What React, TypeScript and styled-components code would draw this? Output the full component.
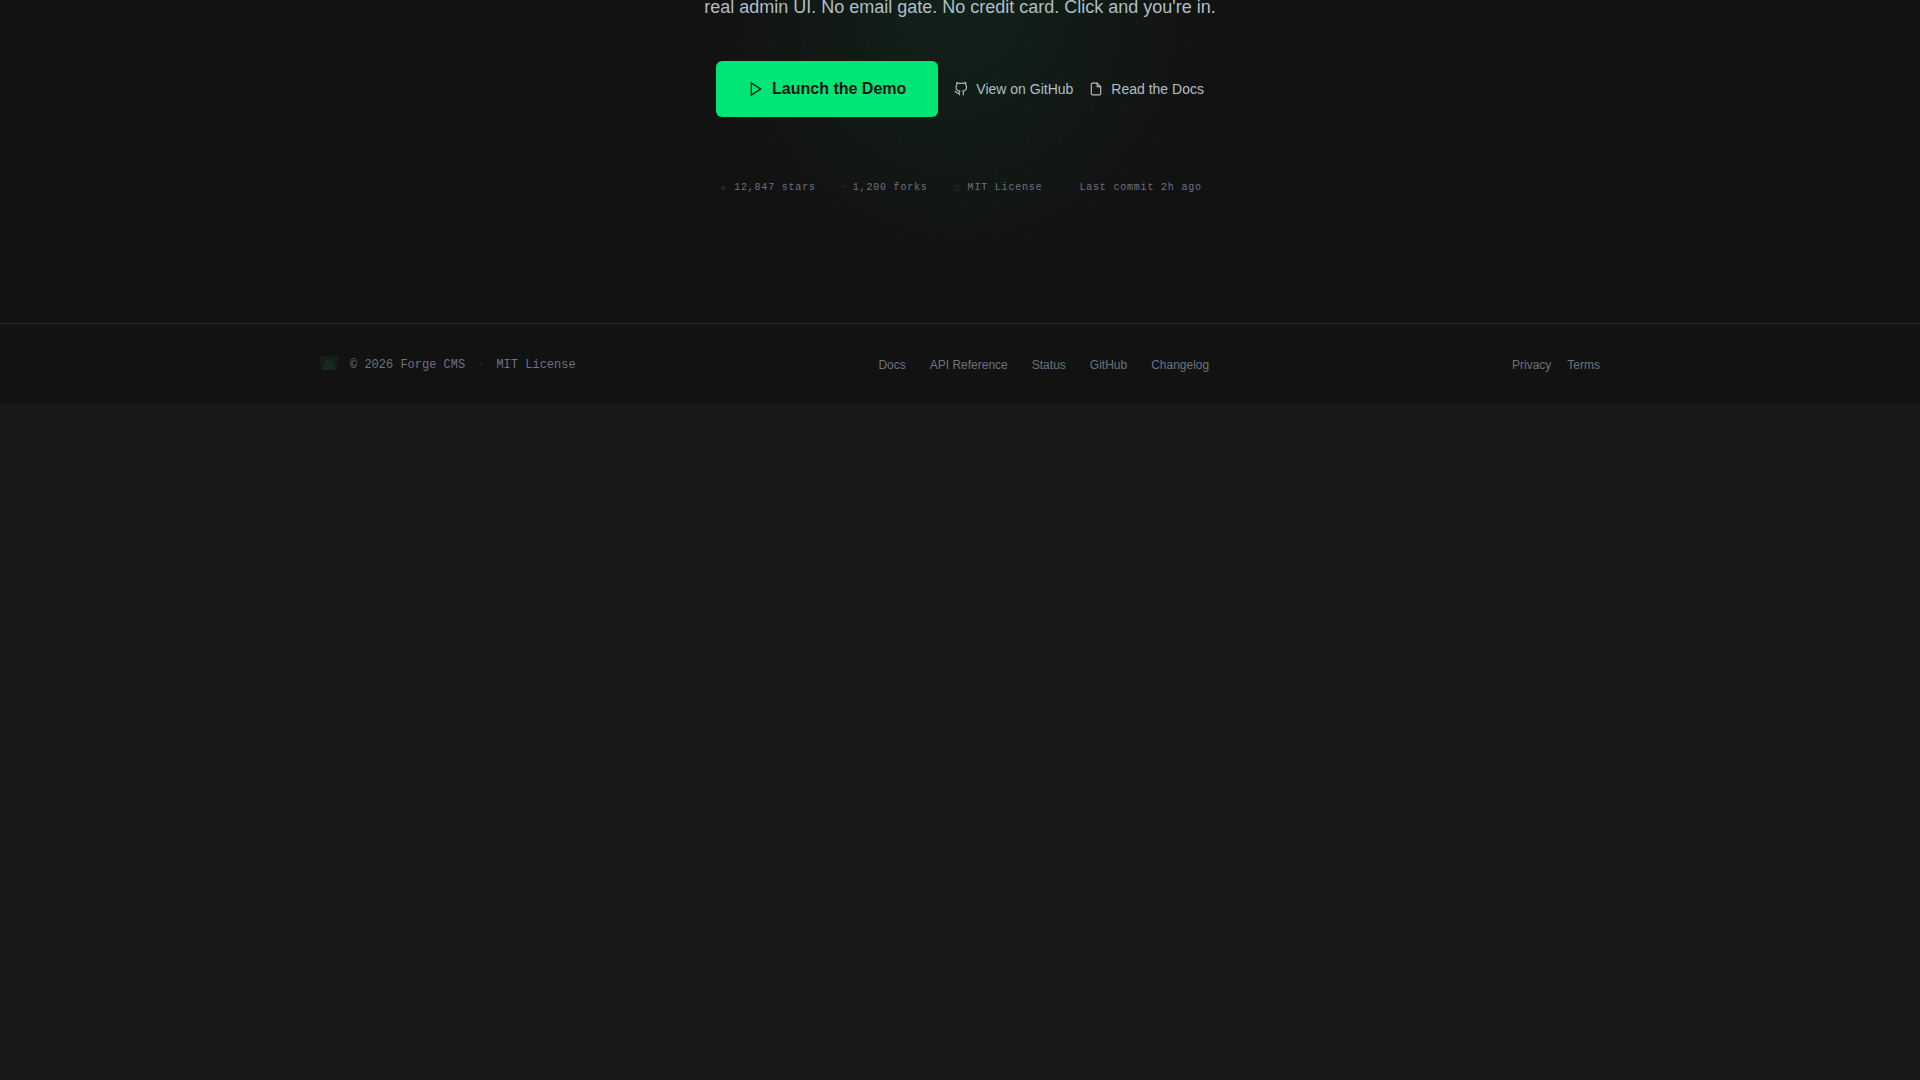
import React from "react";
import styled, { createGlobalStyle } from "styled-components";

const Global = createGlobalStyle`
  * { box-sizing: border-box; }
  body {
    margin: 0;
    background: #191919;
    font-family: "Liberation Sans", Arial, sans-serif;
  }
  a { color: inherit; text-decoration: none; }
`;

const Hero = styled.section`
  display: flex;
  flex-direction: column;
  align-items: center;
  padding-bottom: 126px;
  background:
    radial-gradient(ellipse 250px 270px at 50% 0, rgba(0, 230, 118, 0.08), rgba(0, 230, 118, 0) 100%),
    radial-gradient(circle at 4px 12px, rgba(255, 255, 255, 0.01) 1px, transparent 1px) 0 0 / 32px 32px,
    #121212;
`;

const Lead = styled.p`
  margin: 0;
  font-size: 18px;
  line-height: 14px;
  color: #b0bec5;
`;

const Actions = styled.div`
  display: flex;
  align-items: center;
  gap: 16px;
  margin-top: 47px;
`;

const Launch = styled.button`
  display: flex;
  align-items: center;
  gap: 8px;
  height: 56px;
  padding: 0 32px;
  border: 0;
  border-radius: 6px;
  background: #00e676;
  color: #121212;
  font: bold 16px "Liberation Sans", Arial, sans-serif;
  cursor: pointer;
`;

const TextLink = styled.a`
  display: flex;
  align-items: center;
  gap: 8px;
  font-size: 14px;
  line-height: 20px;
  color: #b0bec5;
`;

const Stats = styled.ul`
  display: flex;
  gap: 24px;
  margin: 62px 0 0;
  padding: 0;
  list-style: none;
  font: 10px/18px "Liberation Mono", monospace;
  letter-spacing: 0.08em;
  color: #6b7280;
`;

const Stat = styled.li`
  display: flex;
  align-items: center;
  gap: 6px;
`;

const Mark = styled.span`
  color: #2a2a2a;
`;

const StatMark = styled(Mark)<{ $wide: boolean }>`
  width: ${(p) => (p.$wide ? 10 : 7)}px;
  font-size: ${(p) => (p.$wide ? 12 : 10)}px;
  text-align: center;
  letter-spacing: 0;
`;

const Footer = styled.footer`
  border-top: 1px solid #2a2a2a;
  padding: 32px 32px 30px;
  background: #121212;
`;

const FooterInner = styled.div`
  display: flex;
  align-items: center;
  justify-content: space-between;
  max-width: 1280px;
  margin: 0 auto;
  font-size: 12px;
  line-height: 18px;
  color: #6b7280;
`;

const Legal = styled.div`
  display: flex;
  align-items: center;
  gap: 12px;
  font-family: "Liberation Mono", monospace;
`;

const Links = styled.nav<{ $gap: number }>`
  display: flex;
  gap: ${(p) => p.$gap}px;
`;

const Icon = ({ size, children }: { size: number; children: React.ReactNode }) => (
  <svg
    width={size}
    height={size}
    viewBox="0 0 24 24"
    fill="none"
    stroke="currentColor"
    strokeWidth="2"
    strokeLinecap="round"
    strokeLinejoin="round"
    aria-hidden="true"
  >
    {children}
  </svg>
);

const ForgeMark = () => (
  <svg width="18" height="18" viewBox="0 0 18 18" aria-hidden="true">
    <path d="M0 0h18v5l-1 2v7H1V7L0 5z" fill="#171d19" />
    <path d="M3 14v-4h2V5h2V3h4v2h2v5h2v4z" fill="#182b20" />
    <path d="M6 9h1v5H6zM11 9h1v5h-1zM8 5h2v3H8z" fill="#14231a" />
  </svg>
);

const stats = [
  { mark: "★", wide: true, text: "12,847 stars" },
  { mark: "⑂", wide: false, text: "1,200 forks" },
  { mark: "⚖", wide: true, text: "MIT License" },
  { mark: "·", wide: false, text: "Last commit 2h ago" },
];

export default function App() {
  return (
    <>
      <Global />
      <main>
        <Hero>
          <Lead>real admin UI. No email gate. No credit card. Click and you're in.</Lead>
          <Actions>
            <Launch type="button">
              <Icon size={16}>
                <polygon points="5 3 19 12 5 21 5 3" strokeLinejoin="miter" />
              </Icon>
              Launch the Demo
            </Launch>
            <TextLink href="#github">
              <Icon size={14}>
                <path d="M9 19c-5 1.5-5-2.5-7-3m14 6v-3.87a3.37 3.37 0 0 0-.94-2.61c3.14-.35 6.44-1.54 6.44-7A5.44 5.44 0 0 0 20 4.77 5.07 5.07 0 0 0 19.91 1S18.73.65 16 2.48a13.38 13.38 0 0 0-7 0C6.27.65 5.09 1 5.09 1A5.07 5.07 0 0 0 5 4.77a5.44 5.44 0 0 0-1.5 3.78c0 5.42 3.3 6.61 6.44 7A3.37 3.37 0 0 0 9 18.13V22" />
              </Icon>
              View on GitHub
            </TextLink>
            <TextLink href="#docs">
              <Icon size={14}>
                <path d="M14 2H6a2 2 0 0 0-2 2v16a2 2 0 0 0 2 2h12a2 2 0 0 0 2-2V8z" />
                <polyline points="14 2 14 8 20 8" />
              </Icon>
              Read the Docs
            </TextLink>
          </Actions>
          <Stats>
            {stats.map((s) => (
              <Stat key={s.text}>
                <StatMark $wide={s.wide} aria-hidden="true">{s.mark}</StatMark>
                {s.text}
              </Stat>
            ))}
          </Stats>
        </Hero>
      </main>
      <Footer>
        <FooterInner>
          <Legal>
            <ForgeMark />
            <span>© 2026 Forge CMS</span>
            <Mark>·</Mark>
            <span>MIT License</span>
          </Legal>
          <Links $gap={24} aria-label="Resources">
            {["Docs", "API Reference", "Status", "GitHub", "Changelog"].map((t) => (
              <a key={t} href={"#" + t.toLowerCase().replace(" ", "-")}>{t}</a>
            ))}
          </Links>
          <Links $gap={16} aria-label="Legal">
            <a href="#privacy">Privacy</a>
            <a href="#terms">Terms</a>
          </Links>
        </FooterInner>
      </Footer>
    </>
  );
}
